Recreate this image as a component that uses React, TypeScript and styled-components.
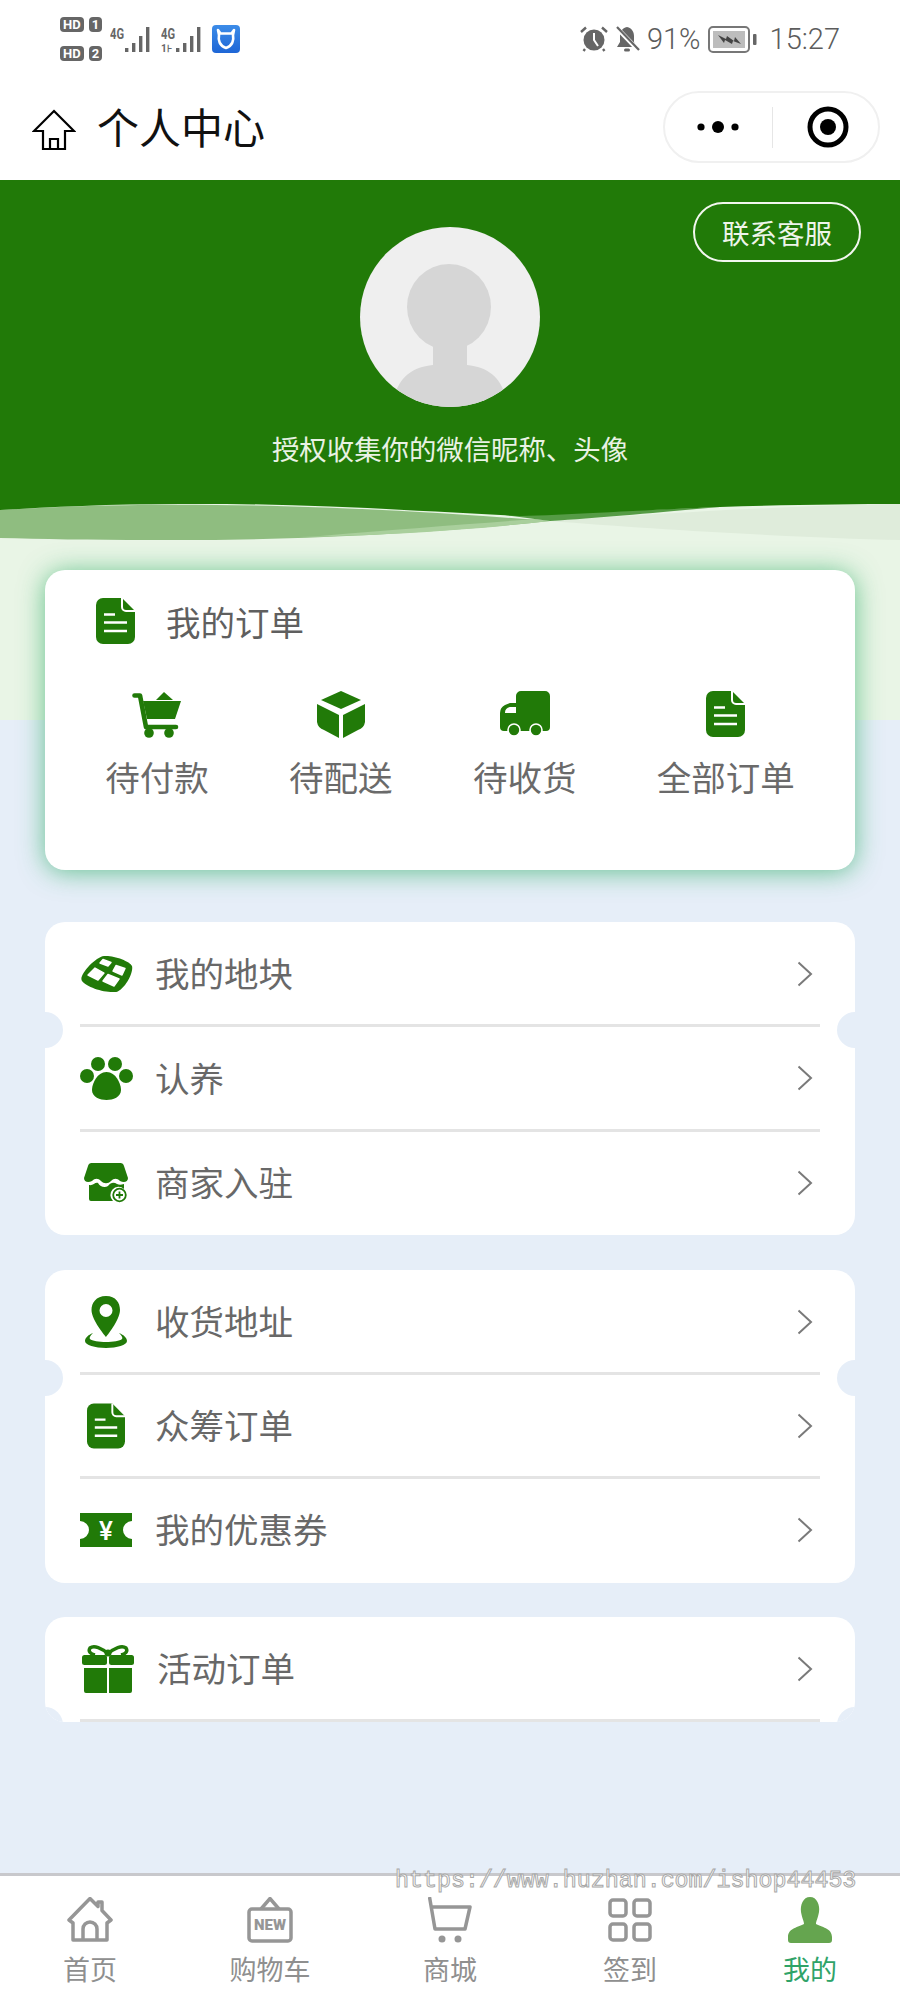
import React from "react";
import styled, { createGlobalStyle } from "styled-components";

const Global = createGlobalStyle`
  html, body { margin: 0; padding: 0; background: #fff; }
  * { box-sizing: border-box; }
`;

const GREEN = "#217a08";
const BG_BLUE = "#e6eef8";
const CJK = `"Noto Sans CJK SC", "Noto Sans", sans-serif`;

const Glyph = styled.svg`
  display: block;
  flex: none;
`;

const Page = styled.div`
  position: relative;
  width: 900px;
  height: 2000px;
  display: flex;
  flex-direction: column;
  overflow: hidden;
  font-family: ${CJK};
  background: #fff;
`;

/* ---------- status bar ---------- */
const StatusBar = styled.div`
  height: 80px;
  flex: none;
  display: flex;
  align-items: center;
  justify-content: space-between;
  padding: 0 60px 2px 60px;
  color: #666;
`;
const StatusGroup = styled.div<{ $gap: number }>`
  display: flex;
  align-items: center;
  gap: ${(p) => p.$gap}px;
`;
const HdStack = styled.div`
  display: flex;
  flex-direction: column;
  gap: 14px;
  margin-right: 1px;
`;
const HdRow = styled.div`
  display: flex;
  gap: 5px;
`;
const HdChip = styled.span`
  height: 15px;
  padding: 0 3px;
  border-radius: 4px;
  background: #666;
  color: #fff;
  font: 700 13px/15px "Roboto", sans-serif;
`;
const StatusText = styled.span`
  font: 300 29px/1 "Roboto", sans-serif;
  color: #5c5c5c;
`;
const ClockText = styled(StatusText)`
  margin-left: 6px;
`;

/* ---------- nav ---------- */
const NavBar = styled.div`
  height: 100px;
  flex: none;
  display: flex;
  align-items: center;
  padding: 0 20px 0 32px;
`;
const NavTitle = styled.div`
  flex: 1;
  margin-left: 21px;
  font-size: 42px;
  font-weight: 400;
  line-height: 1;
  color: #111;
  padding-bottom: 8px;
`;
const Capsule = styled.div`
  width: 217px;
  height: 72px;
  border: 2px solid #f0f0f0;
  border-radius: 36px;
  display: flex;
  align-items: center;
  padding-left: 31px;
  margin-top: -6px;
`;
const CapsuleRule = styled.div`
  width: 1px;
  height: 41px;
  background: #e6e6e6;
  margin: 0 34px 0 32px;
`;

/* ---------- header ---------- */
const Header = styled.div`
  position: relative;
  height: 324px;
  flex: none;
  background: ${GREEN};
  display: flex;
  flex-direction: column;
  align-items: center;
  padding-top: 47px;
`;
const ContactButton = styled.div`
  position: absolute;
  top: 22px;
  right: 39px;
  width: 168px;
  height: 60px;
  border: 2.5px solid #f2f7ef;
  border-radius: 30px;
  display: flex;
  align-items: center;
  justify-content: center;
  color: #eef5ea;
  font-size: 27.5px;
`;
const HeaderHint = styled.div`
  margin-top: 21px;
  font-size: 27.4px;
  line-height: 40px;
  color: #e9f2e4;
  white-space: nowrap;
`;

/* ---------- main ---------- */
const Main = styled.div`
  flex: 1;
  background: linear-gradient(#e9f5e6 0, #e9f5e6 216px, ${BG_BLUE} 216px);
  display: flex;
  flex-direction: column;
  padding: 0 45px;
`;
const WaveBox = styled.div`
  height: 40px;
  margin: 0 -45px 26px;
  flex: none;
`;
const OrderCard = styled.div`
  height: 300px;
  flex: none;
  background: #fff;
  border-radius: 20px;
  box-shadow: 0 2px 26px rgba(50, 175, 105, 0.72);
  padding: 28px 20px 0;
  margin-bottom: 52px;
`;
const OrderHead = styled.div`
  display: flex;
  align-items: center;
  gap: 31px;
  padding-left: 31px;
  height: 46px;
`;
const OrderTitle = styled.div`
  font-size: 34.5px;
  line-height: 46px;
  color: #5f5f5f;
`;
const OrderGrid = styled.div`
  display: flex;
  justify-content: space-around;
  margin-top: 46px;
`;
const OrderItem = styled.div`
  display: flex;
  flex-direction: column;
  align-items: center;
`;
const OrderIconBox = styled.div`
  height: 48px;
  display: flex;
  align-items: center;
  justify-content: center;
`;
const OrderLabel = styled.div`
  font-size: 34.5px;
  line-height: 46px;
  margin-top: 15px;
  color: #6a6a6a;
  white-space: nowrap;
`;

const ListCard = styled.div<{ $height: number }>`
  position: relative;
  height: ${(p) => p.$height}px;
  flex: none;
  background: #fff;
  border-radius: 20px;
  overflow: hidden;
  margin-bottom: 34.5px;
`;
const Notch = styled.span<{ $side: "left" | "right" }>`
  position: absolute;
  top: 90px;
  ${(p) => p.$side}: -18px;
  width: 36px;
  height: 36px;
  border-radius: 50%;
  background: ${BG_BLUE};
`;
const Row = styled.div<{ $left?: number }>`
  height: 104.3px;
  display: flex;
  align-items: center;
  padding: 0 42px 0 ${(p) => p.$left ?? 35}px;
`;
const RowIcon = styled.div`
  width: 52px;
  display: flex;
  justify-content: center;
  flex: none;
`;
const RowLabel = styled.div`
  flex: 1;
  margin-left: 23px;
  padding-bottom: 3px;
  font-size: 34.5px;
  line-height: 1;
  color: #686868;
`;
const Divider = styled.div`
  height: 3px;
  margin: -2px 35px -1px;
  background: #e4e4e4;
`;

/* ---------- tab bar ---------- */
const TabBar = styled.div`
  height: 127px;
  flex: none;
  border-top: 3px solid #c8c8cc;
  background: #fff;
  display: grid;
  grid-template-columns: repeat(5, 1fr);
  padding-top: 21px;
`;
const Tab = styled.div`
  display: flex;
  flex-direction: column;
  align-items: center;
`;
const TabIconBox = styled.div`
  height: 46px;
`;
const TabLabel = styled.div<{ $active?: boolean }>`
  margin-top: 8px;
  font-size: 27px;
  line-height: 36px;
  color: ${(p) => (p.$active ? "#2fa368" : "#8f8f8f")};
`;
const Watermark = styled.div`
  position: absolute;
  left: 395px;
  top: 1866px;
  font: 400 23.3px/30px "Liberation Mono", monospace;
  color: #fff;
  -webkit-text-stroke: 1px #a8a8a8;
  white-space: nowrap;
`;

/* ---------- drawings ---------- */
const Signal = ({ second }: { second?: boolean }) => (
  <Glyph width="44" height="27" viewBox="0 0 44 27">
    <text x="0" y="13" fontFamily="Roboto, sans-serif" fontSize="15" fontWeight="700" fill="#666" textLength="14" lengthAdjust="spacingAndGlyphs">4G</text>
    {second && <text x="0" y="26" fontFamily="Roboto, sans-serif" fontSize="10" fontWeight="700" fill="#666">1⊦</text>}
    <rect x="15" y="22" width="3.4" height="4" fill="#666" />
    <rect x="22" y="17" width="3.4" height="9" fill="#666" />
    <rect x="29" y="10" width="3.4" height="16" fill="#666" />
    <rect x="36" y="1" width="3.4" height="25" fill="#666" />
  </Glyph>
);

const AppBadge = () => (
  <Glyph width="28" height="28" viewBox="0 0 28 28">
    <defs>
      <linearGradient id="bl" x1="0" y1="0" x2="0" y2="1">
        <stop offset="0" stopColor="#3c8ce8" />
        <stop offset="1" stopColor="#1e66d6" />
      </linearGradient>
    </defs>
    <rect width="28" height="28" rx="4" fill="url(#bl)" />
    <path d="M6 5 L8.500 8.500 H19.500 L22 5 L21 10 C22 15 20.500 21 14 23 C7.500 21 6 15 7 10Z" fill="none" stroke="#fff" strokeWidth="2.6" strokeLinejoin="round" />
  </Glyph>
);

const Alarm = () => (
  <Glyph width="28" height="26" viewBox="0 0 28 26">
    <circle cx="14" cy="14" r="10.5" fill="#666" />
    <path d="M14 7v7l4 6" stroke="#fff" strokeWidth="2" fill="none" />
    <path d="M1 6 L6 1.5 M27 6 L22 1.5 M5 23 L3.5 25 M23 23 L24.5 25" stroke="#666" strokeWidth="2.4" />
  </Glyph>
);

const BellOff = () => (
  <Glyph width="25" height="27" viewBox="0 0 25 27">
    <path d="M12 1 C7 2 5 6 5 10 V16 L2 21 H21 L19 16 V10 C19 6 17 2 12 1Z" fill="#666" />
    <rect x="9" y="22.5" width="6" height="3" rx="1.5" fill="#666" />
    <path d="M1 1 L24 25" stroke="#fff" strokeWidth="4.5" />
    <path d="M2 1 L24 24" stroke="#666" strokeWidth="2.2" />
  </Glyph>
);

const Battery = () => (
  <Glyph width="49" height="27" viewBox="0 0 49 27">
    <rect x="1" y="1" width="40" height="25" rx="4" fill="none" stroke="#777" strokeWidth="2" />
    <rect x="5" y="5" width="32" height="17" fill="#bdbdbd" />
    <rect x="45" y="8" width="3.5" height="11" rx="1" fill="#666" />
    <path d="M10 9 L18 13 L19 10 L26 15 L27 11 L33 18 L25 15 L24 18 L17 14 L16 17Z" fill="#444" />
  </Glyph>
);

const HomeOutline = () => (
  <Glyph width="44" height="42" viewBox="0 0 44 42">
    <path d="M22 2 L42 22 H33 V40 H11 V22 H2Z M18 40 V30 H26 V40" fill="none" stroke="#000" strokeWidth="2.2" />
  </Glyph>
);

const Dots = () => (
  <Glyph width="44" height="14" viewBox="0 0 44 14">
    <circle cx="5" cy="7" r="3.6" fill="#000" />
    <circle cx="22" cy="7" r="6" fill="#000" />
    <circle cx="39" cy="7" r="3.6" fill="#000" />
  </Glyph>
);

const Target = () => (
  <Glyph width="42" height="42" viewBox="0 0 42 42">
    <circle cx="21" cy="21" r="18" fill="none" stroke="#000" strokeWidth="5" />
    <circle cx="21" cy="21" r="8" fill="#000" />
  </Glyph>
);

const AvatarArt = () => (
  <Glyph width="180" height="180" viewBox="0 0 180 180">
    <defs>
      <clipPath id="av"><circle cx="90" cy="90" r="90" /></clipPath>
    </defs>
    <g clipPath="url(#av)">
      <rect width="180" height="180" fill="#efefef" />
      <ellipse cx="89" cy="80" rx="42" ry="43" fill="#d6d6d6" />
      <path d="M73 115 H107 V138 C128 140 140 150 146 170 L150 180 H30 L34 170 C40 150 52 140 73 138Z" fill="#d6d6d6" />
    </g>
  </Glyph>
);

const Wave = () => (
  <Glyph width="900" height="40" viewBox="0 0 900 40">
    <path d="M900 0 C800 1 650 10 550 17 C650 25 800 34 900 36Z" fill="#dfecdb" />
    <path d="M0 6 C120 -2 300 -3 550 17 C450 28 300 37 150 36 C90 36 40 35 0 34Z" fill="#8fbd80" />
    <path d="M320 32 C400 25 470 20 535 15 L550 17 C450 28 380 31 300 33Z" fill="#a9cf9c" />
    <path d="M505 11 L720 3 C650 9 600 14 550 17Z" fill="#559b45" />
    <path d="M0 0 H900 C850 0 780 1 720 3 C640 6 570 11 520 12 C400 6 300 -1 180 0 C110 0 50 3 0 6Z" fill={GREEN} />
  </Glyph>
);

const DocIcon = ({ w = 39, h = 46 }: { w?: number; h?: number }) => (
  <Glyph width={w} height={h} viewBox="0 0 39 46">
    <path d="M7 0 H26 L39 13 V39 A7 7 0 0 1 32 46 H7 A7 7 0 0 1 0 39 V7 A7 7 0 0 1 7 0Z" fill={GREEN} />
    <path d="M26 0 V9 A4 4 0 0 0 30 13 H39" fill="none" stroke="#fff" strokeWidth="2" />
    <path d="M8 16.5 H19 M8 24.5 H31 M8 33 H31" stroke="#fff" strokeWidth="2.4" />
  </Glyph>
);

const CartFilled = () => (
  <Glyph width="50" height="47" viewBox="0 0 50 47">
    <path d="M2.500 4.500 H8 L14 36 H44" fill="none" stroke={GREEN} strokeWidth="4.6" strokeLinecap="round" strokeLinejoin="round" />
    <path d="M11 10 H49 L43 28 H15Z" fill={GREEN} />
    <path d="M32 1 L41 9 H24Z" fill={GREEN} />
    <circle cx="17" cy="42" r="4.8" fill={GREEN} />
    <circle cx="37" cy="42" r="4.8" fill={GREEN} />
  </Glyph>
);

const CubeIcon = () => (
  <Glyph width="48" height="47" viewBox="0 0 48 47">
    <path d="M24 0 L44 9 L24 18 L4 9Z" fill={GREEN} />
    <path d="M0 13 L22 24 V47 L7 39 A10 10 0 0 1 0 31Z" fill={GREEN} />
    <path d="M48 13 L26 24 V47 L41 39 A10 10 0 0 0 48 31Z" fill={GREEN} />
  </Glyph>
);

const TruckIcon = () => (
  <Glyph width="50" height="46" viewBox="0 0 50 46">
    <path d="M16 5 A5 5 0 0 1 21 0 H45 A5 5 0 0 1 50 5 V36 A4 4 0 0 1 46 40 H4 A4 4 0 0 1 0 36 V22 A9 9 0 0 1 5 14 L10 12 H16Z" fill={GREEN} />
    <path d="M5 22 A6 6 0 0 1 10 16 H16 V22Z" fill="#fff" />
    <circle cx="14" cy="39" r="6" fill={GREEN} stroke="#fff" strokeWidth="1.6" />
    <circle cx="36" cy="39" r="6" fill={GREEN} stroke="#fff" strokeWidth="1.6" />
  </Glyph>
);

const LandIcon = () => (
  <Glyph width="53" height="38" viewBox="0 0 53 38">
    <path d="M24 1 C33 0 50 6 52 11 C54 18 43 37 35 37 C25 38 6 32 2 26 C-2 21 15 2 24 1Z" fill={GREEN} />
    <path d="M23 4.500 L31 7.500 L28 11 L20 8Z M36 10.500 L45 13.500 L42 20 L33 16Z M15 13 L24 18 L18 25 L8 20Z M28 19.500 L39 24 L34 31 L23 26Z" fill="#fff" stroke="#fff" strokeWidth="1.4" strokeLinejoin="round" />
  </Glyph>
);

const PawIcon = () => (
  <Glyph width="53" height="43" viewBox="0 0 53 43">
    <circle cx="18" cy="7" r="7" fill={GREEN} />
    <circle cx="35" cy="7" r="7" fill={GREEN} />
    <circle cx="7" cy="19" r="7" fill={GREEN} />
    <circle cx="46" cy="19" r="7" fill={GREEN} />
    <path d="M26.500 15 C36 15 41 27 41 33 C41 40 33 43 26.500 43 C20 43 12 40 12 33 C12 27 17 15 26.500 15Z" fill={GREEN} />
  </Glyph>
);

const ShopIcon = () => (
  <Glyph width="44" height="40" viewBox="0 0 44 40">
    <path d="M8 0 H36 A4 4 0 0 1 40 3 L44 15 C44 19 40 20 36 18 C33 15 30 15 27 18 C24 21 20 21 17 18 C14 15 11 15 8 18 C4 20 0 19 0 15 L4 3 A4 4 0 0 1 8 0Z" fill={GREEN} />
    <path d="M5 22 C9 23 11 19 14 20 C16 24 21 25 24 23 C27 19 30 19 33 21 C35 22 37 22 40 21 V26 A7 7 0 0 0 29 38 H7 A2 2 0 0 1 5 36Z" fill={GREEN} />
    <circle cx="35.500" cy="32" r="6.300" fill="#fff" stroke={GREEN} strokeWidth="1.8" />
    <path d="M32 32 H39 M35.500 28.500 V35.500" stroke={GREEN} strokeWidth="1.8" />
  </Glyph>
);

const PinIcon = () => (
  <Glyph width="42" height="52" viewBox="0 0 42 52">
    <path fillRule="evenodd" d="M21 0 C11 0 6.500 7 6.500 14 C6.500 24 21 41 21 41 C21 41 35 24 35 14 C35 7 31 0 21 0Z M21 8 A6.500 6.500 0 1 1 21 21 A6.500 6.500 0 1 1 21 8Z" fill={GREEN} />
    <path d="M8 37 C3 39 0 42 0 45 C0 49 10 52 21 52 C32 52 42 49 42 45 C42 42 39 39 34 37 C37 40 38 42 37 43 C33 47 9 47 5 43 C4 42 5 40 8 37Z" fill={GREEN} />
  </Glyph>
);

const CouponIcon = () => (
  <Glyph width="52" height="34" viewBox="0 0 52 34">
    <path d="M0 0 H52 V8 A9 9 0 0 0 52 26 V34 H0 V26 A9 9 0 0 0 0 8Z" fill={GREEN} />
    <text x="26" y="27" textAnchor="middle" fontFamily="Roboto, sans-serif" fontSize="26" fontWeight="500" fill="#fff">¥</text>
  </Glyph>
);

const GiftIcon = () => (
  <Glyph width="52" height="48" viewBox="0 0 52 48">
    <path d="M26 9 C20 3 12 0 8 3 C6 6 8 9 13 10 M26 9 C32 3 40 0 44 3 C46 6 44 9 39 10" fill="none" stroke={GREEN} strokeWidth="3.5" />
    <circle cx="26" cy="8" r="3.5" fill={GREEN} />
    <rect x="0" y="10" width="25" height="10" rx="2.5" fill={GREEN} />
    <rect x="27" y="10" width="25" height="10" rx="2.5" fill={GREEN} />
    <path d="M2 23 H25 V48 H4 A2 2 0 0 1 2 46Z M27 23 H50 V46 A2 2 0 0 1 48 48 H27Z" fill={GREEN} />
  </Glyph>
);

const Chevron = () => (
  <Glyph width="16" height="26" viewBox="0 0 16 26">
    <path d="M1.500 1.500 L14 13 L1.500 24.500" fill="none" stroke="#7a7a7a" strokeWidth="2" />
  </Glyph>
);

const TabHome = () => (
  <Glyph width="46" height="46" viewBox="0 0 46 46">
    <path d="M23 1.500 L31 9.500 V5 H35 V13.500 L44 23 L40 26 V43 H6 V26 L2 23Z" fill="none" stroke="#969696" strokeWidth="3.5" strokeLinejoin="round" />
    <path d="M16 43 V32 A7 7 0 0 1 30 32 V43" fill="none" stroke="#969696" strokeWidth="3.5" />
  </Glyph>
);

const TabNew = () => (
  <Glyph width="46" height="46" viewBox="0 0 46 46">
    <path d="M14 12 L23 1.500 L32 12" fill="none" stroke="#969696" strokeWidth="3.5" />
    <rect x="2" y="12" width="42" height="32" rx="3" fill="none" stroke="#969696" strokeWidth="3.5" />
    <text x="23" y="33" textAnchor="middle" fontFamily="Roboto, sans-serif" fontSize="15" fontWeight="900" fill="#969696">NEW</text>
  </Glyph>
);

const TabCart = () => (
  <Glyph width="44" height="46" viewBox="0 0 44 46">
    <path d="M1.500 0 L7 32 H37 L42 10 H4" fill="none" stroke="#969696" strokeWidth="3.5" strokeLinejoin="round" />
    <circle cx="14" cy="42" r="3.500" fill="#969696" />
    <circle cx="30" cy="42" r="3.500" fill="#969696" />
  </Glyph>
);

const TabGrid = () => (
  <Glyph width="44" height="46" viewBox="0 0 44 46">
    <rect x="2" y="3" width="16" height="16" rx="3" fill="none" stroke="#969696" strokeWidth="3.5" />
    <rect x="26" y="3" width="16" height="16" rx="3" fill="none" stroke="#969696" strokeWidth="3.5" />
    <rect x="2" y="27" width="16" height="16" rx="3" fill="none" stroke="#969696" strokeWidth="3.5" />
    <rect x="26" y="27" width="16" height="16" rx="3" fill="none" stroke="#969696" strokeWidth="3.5" />
  </Glyph>
);

const TabUser = () => (
  <Glyph width="44" height="46" viewBox="0 0 44 46">
    <path d="M22 0 C29 0 32 8 31 15 C30 21 28 24 28 27 C33 30 44 31 44 40 V43 A3 3 0 0 1 41 46 H3 A3 3 0 0 1 0 43 V40 C0 31 11 30 16 27 C16 24 14 21 13 15 C12 8 15 0 22 0Z" fill="#65a54f" />
  </Glyph>
);

const orders = [
  { label: "待付款", icon: <CartFilled /> },
  { label: "待配送", icon: <CubeIcon /> },
  { label: "待收货", icon: <TruckIcon /> },
  { label: "全部订单", icon: <DocIcon /> },
];

const lists = [
  {
    height: 313,
    rows: [
      { label: "我的地块", icon: <LandIcon /> },
      { label: "认养", icon: <PawIcon /> },
      { label: "商家入驻", icon: <ShopIcon /> },
    ],
  },
  {
    height: 313,
    rows: [
      { label: "收货地址", icon: <PinIcon /> },
      { label: "众筹订单", icon: <DocIcon w={38} h={46} /> },
      { label: "我的优惠券", icon: <CouponIcon /> },
    ],
  },
];

const tabs = [
  { label: "首页", icon: <TabHome /> },
  { label: "购物车", icon: <TabNew /> },
  { label: "商城", icon: <TabCart /> },
  { label: "签到", icon: <TabGrid /> },
  { label: "我的", icon: <TabUser />, active: true },
];

export default function App() {
  return (
    <Page>
      <Global />
      <StatusBar>
        <StatusGroup $gap={7}>
          <HdStack>
            <HdRow><HdChip>HD</HdChip><HdChip>1</HdChip></HdRow>
            <HdRow><HdChip>HD</HdChip><HdChip>2</HdChip></HdRow>
          </HdStack>
          <Signal />
          <Signal second />
          <AppBadge />
        </StatusGroup>
        <StatusGroup $gap={7}>
          <Alarm />
          <BellOff />
          <StatusText>91%</StatusText>
          <Battery />
          <ClockText>15:27</ClockText>
        </StatusGroup>
      </StatusBar>

      <NavBar>
        <HomeOutline />
        <NavTitle>个人中心</NavTitle>
        <Capsule>
          <Dots />
          <CapsuleRule />
          <Target />
        </Capsule>
      </NavBar>

      <Header>
        <ContactButton>联系客服</ContactButton>
        <AvatarArt />
        <HeaderHint>授权收集你的微信昵称、头像</HeaderHint>
      </Header>

      <Main>
        <WaveBox><Wave /></WaveBox>
        <OrderCard>
          <OrderHead>
            <DocIcon />
            <OrderTitle>我的订单</OrderTitle>
          </OrderHead>
          <OrderGrid>
            {orders.map((o) => (
              <OrderItem key={o.label}>
                <OrderIconBox>{o.icon}</OrderIconBox>
                <OrderLabel>{o.label}</OrderLabel>
              </OrderItem>
            ))}
          </OrderGrid>
        </OrderCard>

        {lists.map((list, i) => (
          <ListCard key={i} $height={list.height}>
            <Notch $side="left" />
            <Notch $side="right" />
            {list.rows.map((r, j) => (
              <React.Fragment key={r.label}>
                {j > 0 && <Divider />}
                <Row>
                  <RowIcon>{r.icon}</RowIcon>
                  <RowLabel>{r.label}</RowLabel>
                  <Chevron />
                </Row>
              </React.Fragment>
            ))}
          </ListCard>
        ))}

        <ListCard $height={105}>
          <Notch $side="left" />
          <Notch $side="right" />
          <Row $left={37}>
            <RowIcon><GiftIcon /></RowIcon>
            <RowLabel>活动订单</RowLabel>
            <Chevron />
          </Row>
          <Divider />
        </ListCard>
      </Main>

      <TabBar>
        {tabs.map((t) => (
          <Tab key={t.label}>
            <TabIconBox>{t.icon}</TabIconBox>
            <TabLabel $active={t.active}>{t.label}</TabLabel>
          </Tab>
        ))}
      </TabBar>
      <Watermark>https://www.huzhan.com/ishop44453</Watermark>
    </Page>
  );
}
